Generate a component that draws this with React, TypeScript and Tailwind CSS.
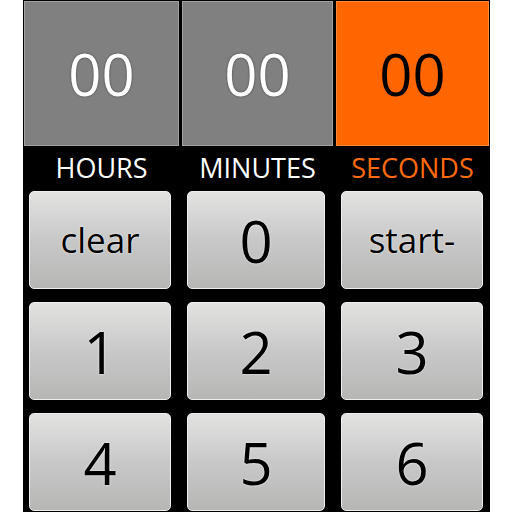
import React from "react";

const units = [
  { label: "HOURS", active: false },
  { label: "MINUTES", active: false },
  { label: "SECONDS", active: true },
];

const keys = ["clear", "0", "start-", "1", "2", "3", "4", "5", "6"];

const KeyButton = ({ text }: { text: string }) => {
  const isWord = text.length > 1;
  return (
    <button
      className={`h-[98px] rounded-[5px] border border-[#eeeeee] bg-linear-to-b from-[#e2e3e1] via-[#c8c8c8] to-[#b6b7b5] text-black flex items-center justify-center [text-shadow:0_0_2px_#ffffff] ${
        isWord ? "text-[35px]" : "text-[58px]"
      }`}
    >
      {text}
    </button>
  );
};

export default function App() {
  return (
    <div className="w-[512px] h-[512px] bg-white overflow-hidden font-['Open_Sans',sans-serif]">
      <div className="ml-[23px] w-[467px] h-full bg-black pt-[1px]">
        {/* time fields */}
        <div className="grid grid-cols-[155px_151px_153px] gap-x-[3px] pl-[1px]">
          {units.map((u) => (
            <div
              key={u.label}
              className={`h-[145px] flex items-center justify-center text-[58px] border ${
                u.active
                  ? "bg-[#ff6600] border-[#ff8a3a] text-black"
                  : "bg-[#808080] border-[#a2a2a2] text-white [text-shadow:0_0_2px_#333333]"
              }`}
            >
              00
            </div>
          ))}
        </div>

        {/* unit labels */}
        <div className="grid grid-cols-[155px_151px_153px] gap-x-[3px] pl-[1px] h-[44px]">
          {units.map((u) => (
            <div
              key={u.label}
              className={`flex items-center justify-center text-[27px] pt-[1px] ${
                u.active ? "text-[#ff6a10]" : "text-white"
              }`}
            >
              {u.label}
            </div>
          ))}
        </div>

        {/* keypad */}
        <div className="grid grid-cols-[142px_138px_142px] gap-x-4 gap-y-[13px] pl-[6px] pt-[1px]">
          {keys.map((k) => (
            <KeyButton key={k} text={k} />
          ))}
        </div>
      </div>
    </div>
  );
}
